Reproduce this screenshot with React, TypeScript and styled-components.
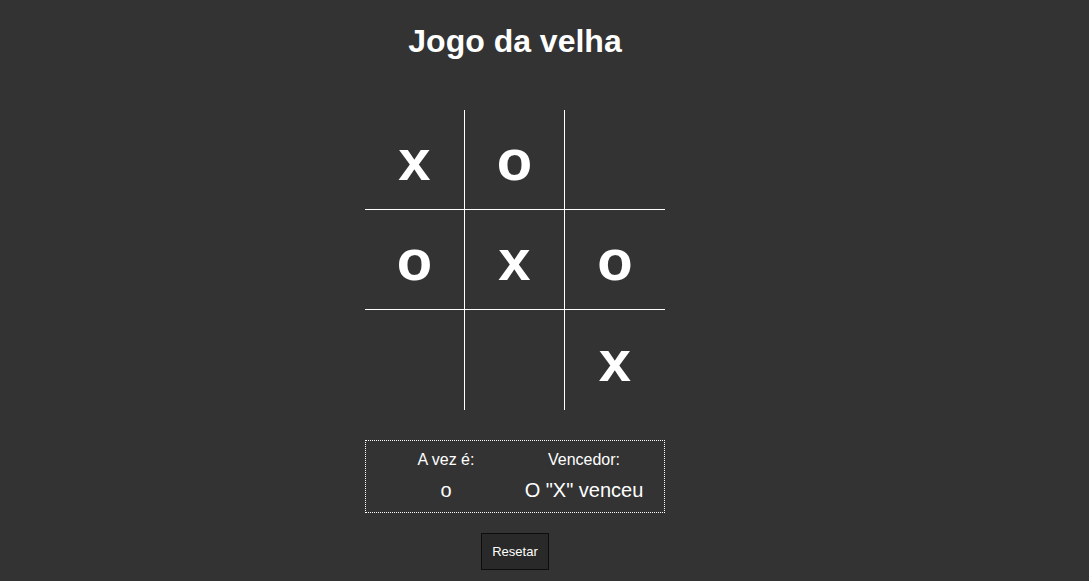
import React from "react";
import styled, { createGlobalStyle } from "styled-components";

const Global = createGlobalStyle`
  html, body { margin: 0; padding: 0; background: #333333; }
  body { font-family: "Liberation Sans", Arial, sans-serif; color: #ffffff; }
`;

const Page = styled.main`
  min-height: 100vh;
  box-sizing: border-box;
  padding: 23px 59px 0 0;
  display: flex;
  flex-direction: column;
  align-items: center;
`;

const Title = styled.h1`
  margin: 0;
  font-size: 32px;
  font-weight: 700;
  line-height: 37px;
`;

const Board = styled.div`
  margin-top: 50px;
  display: grid;
  grid-template-columns: repeat(3, 100px);
  grid-template-rows: repeat(3, 100px);
`;

const Cell = styled.div<{ $right: boolean; $bottom: boolean }>`
  box-sizing: border-box;
  border-right: ${(p) => (p.$right ? "1px solid #ffffff" : "none")};
  border-bottom: ${(p) => (p.$bottom ? "1px solid #ffffff" : "none")};
  display: flex;
  align-items: center;
  justify-content: center;
  font-size: 58px;
  font-weight: 700;
  line-height: 1;
  padding-top: 1px;
`;

const Status = styled.div`
  margin-top: 30px;
  width: 300px;
  box-sizing: border-box;
  border: 1px dotted #ffffff;
  display: grid;
  grid-template-columns: 120px 120px;
  column-gap: 18px;
  justify-content: center;
  padding: 9px 0 9px;
`;

const Column = styled.div`
  display: flex;
  flex-direction: column;
  align-items: center;
`;

const Label = styled.span`
  font-size: 16px;
  line-height: 20px;
`;

const Value = styled.span`
  font-size: 20px;
  line-height: 25px;
  margin-top: 8px;
`;

const ResetButton = styled.button`
  margin-top: 20px;
  background: #292929;
  color: #ffffff;
  border: 1px solid #0d0d0d;
  font-family: "Liberation Sans", Arial, sans-serif;
  font-size: 13px;
  line-height: 15px;
  padding: 10px 10px;
  cursor: pointer;
`;

const board = ["x", "o", "", "o", "x", "o", "", "", "x"];

export default function App() {
  return (
    <>
      <Global />
      <Page>
        <Title>Jogo da velha</Title>
        <Board>
          {board.map((v, i) => (
            <Cell key={i} $right={i % 3 !== 2} $bottom={i < 6}>
              {v}
            </Cell>
          ))}
        </Board>
        <Status>
          <Column>
            <Label>A vez é:</Label>
            <Value>o</Value>
          </Column>
          <Column>
            <Label>Vencedor:</Label>
            <Value>O "X" venceu</Value>
          </Column>
        </Status>
        <ResetButton>Resetar</ResetButton>
      </Page>
    </>
  );
}
